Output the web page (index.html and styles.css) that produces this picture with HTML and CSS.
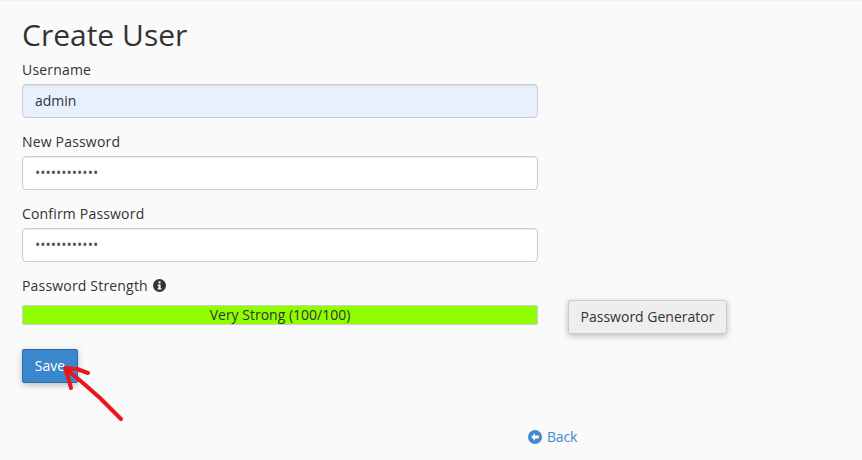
FILE: index.html
```html
<!DOCTYPE html>
<html lang="en">
<head>
    <meta charset="UTF-8">
    <meta name="viewport" content="width=device-width, initial-scale=1.0">
    <title>Create User</title>
    <link rel="stylesheet" href="styles.css">
</head>
<body>

    <div class="top-shadow"></div>

    <main class="content">
        <h1>Create User</h1>

        <form class="user-form">
            <div class="form-group">
                <label for="username">Username</label>
                <input class="form-control autofilled" type="text" id="username" value="admin">
            </div>

            <div class="form-group">
                <label for="password">New Password</label>
                <input class="form-control" type="password" id="password" value="abcdefghijkl">
            </div>

            <div class="form-group">
                <label for="confirm">Confirm Password</label>
                <input class="form-control" type="password" id="confirm" value="abcdefghijkl">
            </div>

            <div class="strength-label">
                <span>Password Strength</span>
                <svg class="info-icon" viewBox="0 0 14 14" width="13" height="13" aria-hidden="true">
                    <circle cx="7" cy="7" r="7" fill="#333"/>
                    <rect x="5.9" y="2.5" width="2.3" height="2.2" fill="#fafafa"/>
                    <path d="M4.9 5.8h3.3v4.1h1v1.4H4.9V9.9h1V7.2h-1z" fill="#fafafa"/>
                </svg>
            </div>

            <div class="strength-row">
                <div class="strength-bar">Very Strong (100/100)</div>
                <button class="btn btn-default" type="button">Password Generator</button>
            </div>

            <button class="btn btn-primary" type="button">Save</button>
        </form>

        <div class="back-row">
            <a class="back-link" href="#">
                <svg viewBox="0 0 14 14" width="14" height="14" aria-hidden="true">
                    <circle cx="7" cy="7" r="7" fill="#428bca"/>
                    <path d="M7 3.2 3.2 7 7 10.8V8.4h3.8V5.6H7z" fill="#fafafa"/>
                </svg>
                Back
            </a>
        </div>
    </main>

    <!-- red arrow drawn over the screenshot -->
    <svg class="arrow" viewBox="0 0 862 460" width="862" height="460" aria-hidden="true">
        <path d="M65 368L68 377L71 388M65 368L77 369L88 373M65 368L83 383L100 398L121 419" fill="none" stroke="#e8171d" stroke-width="4" stroke-linecap="round" stroke-linejoin="round"/>
    </svg>

</body>
</html>
```

FILE: styles.css
```css
/* page */
body {
    font-family: 'Open Sans', 'Liberation Sans', sans-serif;
    font-size: 14px;
    color: #333;
    background-color: #fafafa;
    margin: 0;
    height: 460px;
    overflow: hidden;
}

.top-shadow {
    height: 2px;
    background: linear-gradient(#eeeeee, #fafafa);
}

.content {
    padding: 0 22px;
}

h1 {
    font-size: 30px;
    font-weight: 400;
    line-height: 38px;
    margin: 14px 0 6px;
}

/* form */
.user-form {
    width: 516px;
}

.form-group {
    margin-bottom: 14px;
}

label,
.strength-label {
    display: block;
    font-weight: 400;
    line-height: 19px;
    letter-spacing: 0.18px;
    margin-bottom: 5px;
}

.form-control {
    display: block;
    box-sizing: border-box;
    width: 100%;
    height: 34px;
    padding: 5px 12px 7px;
    font-family: inherit;
    font-size: 14px;
    color: #555;
    background-color: #fff;
    border: 1px solid #ccc;
    border-radius: 4px;
    box-shadow: inset 0 1px 1px rgba(0, 0, 0, 0.075);
    outline: none;
}

.form-control.autofilled {
    color: #333;
    background-color: #e8f0fe;
}

.strength-label {
    display: flex;
    align-items: center;
    gap: 5px;
}

.info-icon {
    flex: none;
}

/* strength bar + generator button */
.strength-row {
    display: flex;
    align-items: flex-start;
    gap: 30px;
    height: 34px;
    margin-bottom: 15px;
}

.strength-bar {
    flex: none;
    box-sizing: border-box;
    width: 516px;
    height: 20px;
    margin-top: 5px;
    line-height: 18px;
    text-align: center;
    background-color: #8fff00;
    border: 1px solid #ccc;
    border-radius: 2px;
}

.btn {
    display: block;
    box-sizing: border-box;
    height: 34px;
    padding: 6px 12px;
    font-family: inherit;
    font-size: 14px;
    line-height: 20px;
    border-radius: 2px;
    cursor: pointer;
    box-shadow: 0 2px 6px rgba(0, 0, 0, 0.25);
}

.btn-default {
    flex: none;
    width: 159px;
    padding: 6px 0;
    color: #333;
    background-color: #eee;
    border: 1px solid #ccc;
}

.btn-primary {
    width: 56px;
    padding: 6px 0;
    color: #fff;
    background-color: #3a87cd;
    border: 1px solid #2e6da4;
}

/* back link */
.back-row {
    margin-top: 44px;
    padding-left: 506px;
}

.back-link {
    display: inline-flex;
    align-items: center;
    gap: 5px;
    line-height: 19px;
    letter-spacing: -0.2px;
    color: #428bca;
    text-decoration: none;
}

/* drawn on top of the page */
.arrow {
    position: absolute;
    top: 0;
    left: 0;
    pointer-events: none;
}
```
